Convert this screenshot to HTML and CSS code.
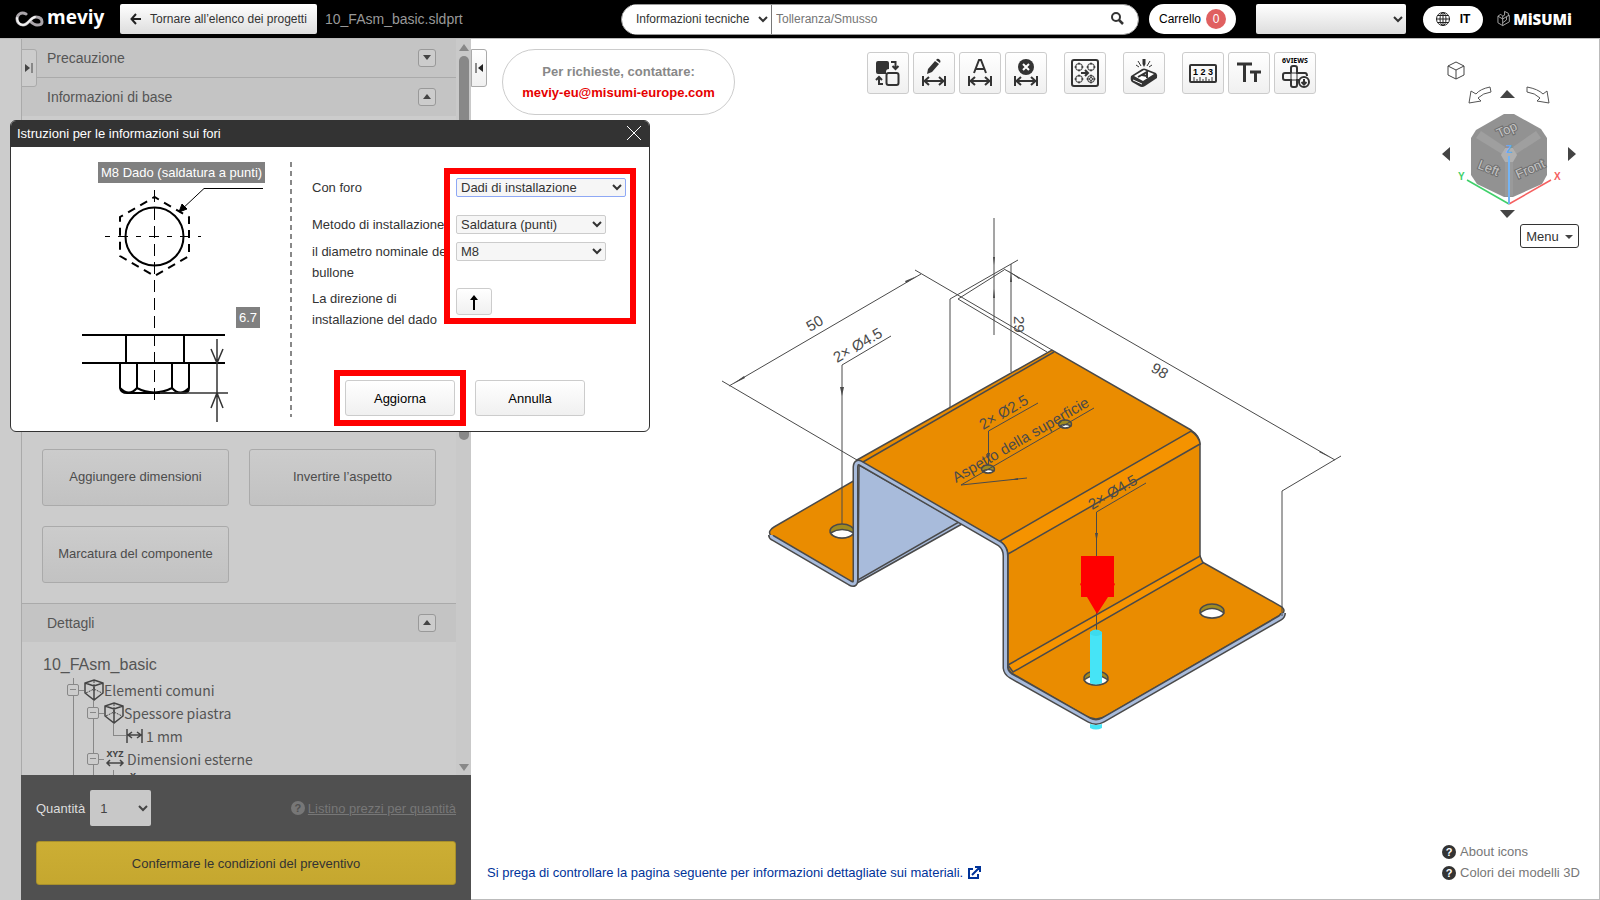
FILE: index.html
```
<!DOCTYPE html>
<html lang="it">
<head>
    <meta charset="UTF-8">
    <meta name="viewport" content="width=device-width, initial-scale=1.0">
    <title>meviy - 10_FAsm_basic.sldprt</title>
    <link rel="stylesheet" href="styles.css">
</head>
<body>

    <header class="topbar">
        <div class="logo">
            <svg width="29" height="16" viewBox="0 0 29 16" fill="none" stroke-linecap="round">
                <path d="M11 3C6 0 2 4 2 8c0 3 2 6 6 6 6 0 7-8 13-8 4 0 6 2 6 5 0 3-3 3-5 3-3 0-5-2-7-4" stroke="#aaa5aa" stroke-width="3"/>
                <path d="M2 7c0 4 3 7 6 7 5 0 7-7 12-8" stroke="#f2f2f2" stroke-width="2"/>
            </svg>
            <span>meviy</span>
        </div>
        <button class="back">
            <svg width="12" height="12" viewBox="0 0 12 12" fill="none" stroke="#222" stroke-width="2"><path d="M6 1L1.500 6L6 11M2 6H11"/></svg>
            Tornare all’elenco dei progetti
        </button>
        <span class="filename">10_FAsm_basic.sldprt</span>

        <div class="search">
            <select aria-label="Categoria"><option>Informazioni tecniche</option></select>
            <input type="text" placeholder="Tolleranza/Smusso" aria-label="Cerca">
            <svg width="15" height="15" viewBox="0 0 15 15" fill="none" stroke="#333"><circle cx="6" cy="5" r="4" stroke-width="2"/><path d="M9 8L13 12" stroke-width="2.500"/></svg>
        </div>
        <button class="cart">Carrello <span class="badge">0</span></button>
        <select class="account" aria-label="Account"><option></option></select>
        <button class="lang">
            <svg width="14" height="14" viewBox="0 0 14 14" fill="none" stroke="#222"><circle cx="7" cy="7" r="6.500"/><ellipse cx="7" cy="7" rx="3" ry="6.500"/><path d="M7 0V14M0 7H14M1.500 3.500H12.500M1.500 10.500H12.500"/></svg>
            IT
        </button>
        <div class="misumi">
            <svg width="15" height="18" viewBox="0 0 15 18" fill="none" stroke="#aaa"><path d="M1 6L6 9V16L1 13ZM6 9L10 6.500M6 16L13 12V5L10 6.500V10L6 13M6 6L8 5V1L12 3V6M1 6L4 4L6 6V9"/></svg>
            <span>MiSUMi</span>
        </div>
    </header>

    <div class="layout">
        <aside class="sidebar">
            <button class="handle handle-open" aria-label="Apri pannello">
                <svg width="8" height="10" viewBox="0 0 8 10"><path d="M0 1L5 5L0 9Z" fill="#444"/><path d="M7 0V10" stroke="#444"/></svg>
            </button>
            <div class="scroll">
                <div class="panel">
                    <div class="section-head first"><span>Precauzione</span><button class="toggle down" aria-label="Espandi"></button></div>
                    <div class="section-head"><span>Informazioni di base</span><button class="toggle" aria-label="Riduci"></button></div>
                    <div class="actions">
                        <button>Aggiungere dimensioni</button>
                        <button>Invertire l’aspetto</button>
                        <button>Marcatura del componente</button>
                    </div>
                    <div class="section-head"><span>Dettagli</span><button class="toggle" aria-label="Riduci"></button></div>
                    <div class="tree">
                        <p>10_FAsm_basic</p>
                        <ul>
                            <li>
                                <div class="row"><i class="minus"></i>
                                    <svg class="part" viewBox="0 0 20 22"><use href="#cube"/></svg>Elementi comuni</div>
                                <ul>
                                    <li>
                                        <div class="row"><i class="minus"></i>
                                            <svg class="part" viewBox="0 0 20 22"><use href="#cube"/></svg>Spessore piastra</div>
                                        <ul>
                                            <li class="leaf"><div class="row">
                                                <svg class="dim" viewBox="0 0 17 14" fill="none" stroke="#444" stroke-width="1.500"><path d="M1 0V14M16 0V14M2 6H15M6 3L2 6L6 9M11 3L15 6L11 9"/></svg>1 mm</div></li>
                                        </ul>
                                    </li>
                                    <li>
                                        <div class="row"><i class="minus"></i>
                                            <svg class="xyz" viewBox="0 0 20 20"><text x="10" y="8" text-anchor="middle">XYZ</text><path d="M2 14H18M5 11L2 14L5 17M15 11L18 14L15 17" fill="none" stroke="#444" stroke-width="1.500"/></svg>Dimensioni esterne</div>
                                        <ul>
                                            <li><div class="row"><svg class="axis" viewBox="0 0 20 20"><text x="8" y="7" text-anchor="middle">X</text></svg></div></li>
                                        </ul>
                                    </li>
                                </ul>
                            </li>
                        </ul>
                    </div>
                </div>
                <div class="scrollbar"><i class="up"></i><span></span><i class="dn"></i></div>
            </div>
            <div class="order">
                <div class="order-line">
                    <label for="qty">Quantità</label>
                    <select id="qty"><option>1</option></select>
                    <a href="#"><i class="help">?</i><span>Listino prezzi per quantità</span></a>
                </div>
                <button class="confirm">Confermare le condizioni del preventivo</button>
            </div>
        </aside>

        <main class="viewer">
            <svg class="canvas" width="1128" height="860" viewBox="471 39 1128 860">
                <g class="edge">
                    <!-- left flange -->
                    <path class="face" d="M774 527L855 480V582L851 582L771 536Q767 531 774 527Z"/>
                    <ellipse cx="842" cy="531" rx="12" ry="7" fill="#a08a20"/>
                    <path d="M830.500 533Q842 526 854 533Q850 538 842 538Q834 538 830.500 533Z" fill="#fff"/>
                    <!-- inner wall -->
                    <path d="M857 583L962 524L958 520L857 579Z" fill="#a8bbdb"/>
                    <path d="M859 465L959 522L858 580Z" fill="#a8bbdb"/>
                    <!-- top, front wall and right flange -->
                    <path class="face" d="M857 460L1052 350L1191 430Q1200 436 1200 444V557Q1200 561 1204 563L1282 607Q1286 611 1282 614L1106 716Q1096 722 1086 716L1013 674Q1008 671 1008 666V555Q1008 546 1000 542Z"/>
                    <path d="M1000 541L1191 431Q1199 436 1200 444L1008 554Q1007 546 1000 541ZM1008 665L1200 556L1203 563L1013 672Z" fill="#f59300"/>
                    <path d="M863 462L1054 352"/>
                </g>
                <path class="rim" d="M771 535Q771 537 773 538L850 583Q855.500 586 855.500 580V467Q856 460 862 464L1000 544Q1005.500 548 1005.500 556V668Q1006 673 1011 676L1089 720Q1096 724 1103 720L1280 618Q1283 616 1283 613"/>
                <path class="rim-fill" d="M771 535Q771 537 773 538L850 583Q855.500 586 855.500 580V467Q856 460 862 464L1000 544Q1005.500 548 1005.500 556V668Q1006 673 1011 676L1089 720Q1096 724 1103 720L1280 618Q1283 616 1283 613"/>

                <!-- holes -->
                <g class="edge">
                    <g fill="#a08a20"><ellipse cx="988" cy="469" rx="6.500" ry="4"/><ellipse cx="1065" cy="424" rx="6.500" ry="4"/><ellipse cx="1212" cy="611" rx="12" ry="7"/><ellipse cx="1096" cy="678" rx="12" ry="7"/></g>
                    <g fill="#fff"><path d="M983 471Q988 468 994 471Q992 473 988 473Q985 473 983 471ZM1060 426Q1065 423 1071 426Q1069 428 1065 428Q1062 428 1060 426ZM1200 613Q1212 604 1224 613Q1221 618 1212 618Q1203 618 1200 613ZM1084 680Q1096 671 1108 680Q1105 685 1096 685Q1087 685 1084 680Z"/></g>
                </g>

                <!-- dimension lines -->
                <g class="line">
                    <path d="M722 381L857 460M729 386L921 274M915 270L1052 350M958 299L1047 352M958 299L1004 270M950 408V299L1018 260M1011 264V372M994 218V335"/>
                    <path d="M1004 269L1335 460M1341 456L1282 491V616"/>
                    <path d="M842 524V365L891 336M988.500 465V431L1038 403M1096.500 632V512L1146 483M1094 408L961 485L1027 478"/>
                </g>
                <path class="tip" d="M733 384L745 378L744 376ZM917 276L905 281L906 283ZM994 265L993 257H995ZM994 289L993 298H995ZM1011 272L1010 282H1012ZM842 396L840 387H844ZM1096.500 541L1095 533H1098ZM988.500 461L987 453H990ZM1007 270L1020 278L1019 279ZM1331 458L1319 452L1320 451ZM1010 480L1018 478V480Z"/>
                <g class="note">
                    <text transform="translate(810 332) rotate(-30)">50</text>
                    <text transform="translate(837 363) rotate(-30)">2× Ø4.5</text>
                    <text transform="translate(983 430) rotate(-30)">2× Ø2.5</text>
                    <text transform="translate(1092 510) rotate(-30)">2× Ø4.5</text>
                    <text transform="translate(956 483) rotate(-30)">Aspetto della superficie</text>
                    <text transform="translate(1014 316) rotate(90)">29</text>
                    <text transform="translate(1150 371) rotate(30)">98</text>
                </g>

                <!-- selected hole -->
                <path d="M1081 556H1114V583L1115 584L1114 586V597H1108L1097 614L1087 597H1081V586L1080 584L1081 583Z" fill="#f00"/>
                <path d="M1090 632Q1096 627 1102 632V683Q1096 686 1090 683ZM1090 724Q1096 726 1102 724V728Q1096 731 1090 728Z" fill="#46e4f6"/>
                <ellipse cx="1096" cy="633" rx="6" ry="3" fill="#3ddbed"/>
            </svg>

            <div class="viewer-top">
                <button class="handle" aria-label="Chiudi pannello">
                    <svg width="8" height="10" viewBox="0 0 8 10"><path d="M8 1L3 5L8 9Z" fill="#222"/><path d="M1 0V10" stroke="#222"/></svg>
                </button>
                <div class="contact">
                    <span>Per richieste, contattare:</span>
                    <a href="mailto:meviy-eu@misumi-europe.com">meviy-eu@misumi-europe.com</a>
                </div>
                <div class="toolbar">
                    <div class="group">
                        <button aria-label="Invertire"><svg viewBox="0 0 28 30"><path d="M4 3H13Q15 3 15 5V11Q12 11 12 14V16H4Q2 16 2 14V5Q2 3 4 3Z" fill="#333"/><rect x="12.500" y="15" width="12" height="12" rx="2" class="s2"/><path class="s2" d="M17 4H21.500V11M18.500 8L21.500 11L24.500 8M9 26H5V19M2 22L5 19L8 22"/></svg></button>
                        <button aria-label="Modifica quota"><svg viewBox="0 0 28 30"><path d="M7 16L8 11L15 3L19 6L12 14ZM16 2L17 1Q18 0 20 2Q21 3 20 5Z" fill="#333"/><use href="#arrows"/></svg></button>
                        <button aria-label="Quota"><svg viewBox="0 0 28 30"><path class="s2" d="M8 15L13 2H15L20 15M10 11H18"/><use href="#arrows"/></svg></button>
                        <button aria-label="Elimina quota"><svg viewBox="0 0 28 30"><circle cx="14" cy="9" r="8" fill="#333"/><path d="M11 6L17 12M17 6L11 12" stroke="#fff" stroke-width="2"/><use href="#arrows"/></svg></button>
                    </div>
                    <div class="group">
                        <button aria-label="Fori"><svg viewBox="0 0 28 30"><rect x="1" y="2" width="26" height="26" rx="2" class="s2"/><g class="s1"><circle cx="8" cy="9" r="3.500"/><circle cx="20" cy="9" r="3.500"/><circle cx="8" cy="21" r="3.500"/><circle cx="20" cy="21" r="3.500"/><circle cx="20" cy="21" r="1.500"/><path d="M3.500 9H6M10 9H12.500M8 4.500V7M8 11V13.500M15.500 9H18M22 9H24.500M20 4.500V7M20 11V13.500M3.500 21H6M10 21H12.500M8 16.500V19M8 23V25.500M15.500 21H18M22 21H24.500M20 16.500V19M20 23V25.500"/></g><path class="s2" d="M10 15H17M14 12L17 15L14 18"/></svg></button>
                    </div>
                    <div class="group">
                        <button aria-label="Marcatura"><svg viewBox="0 0 28 30"><path d="M1 18L12 11Q14 10 16 11L26 15Q28 17 27 20L15 28Q12 30 9 28L2 24Q0 22 1 18Z" fill="#333"/><path d="M4 18L14 12L24 16L13 23Z" fill="#fff"/><path d="M8 19L17 14L17 20M12 17L17 18" fill="none" stroke="#333" stroke-width="2"/><path d="M3 22L12 26" stroke="#fff"/><path d="M12.500 1H15.500V6L14 9L12.500 6Z" fill="#333"/><path class="s1" d="M8 3L11 8M20 3L17 8M6 7L9 9M22 7L19 9"/></svg></button>
                    </div>
                    <div class="group">
                        <button aria-label="Misura"><svg viewBox="0 0 28 30"><rect x="1" y="7" width="26" height="17" rx="1" class="s2"/><path class="s1" d="M5 24V19M8 24V21M11 24V19M14 24V21M17 24V19M20 24V21M23 24V19"/><text x="14" y="17" text-anchor="middle" class="digits">1 2 3</text></svg></button>
                        <button aria-label="Testo"><svg viewBox="0 0 28 30" fill="none" stroke="#333" stroke-width="3"><path d="M2 6H17M9.500 6V24M15 14H26M20.500 14V24"/></svg></button>
                        <button aria-label="6 viste"><svg viewBox="0 0 28 30"><text x="14" y="5" text-anchor="middle" class="views">6VIEWS</text><path class="s2" d="M10 15V10Q10 8 12 8H14Q16 8 16 10V15H24Q26 15 26 18M10 15H4Q2 15 2 17V20Q2 22 4 22H10V27Q10 29 12 29H14Q16 29 16 27V22H18"/><path class="s1" d="M10 15H16V22H10Z"/><circle cx="23" cy="24" r="5" class="ring"/><path class="s2" d="M23 21V26M20.500 24L23 26.500L25.500 24"/></svg></button>
                    </div>
                </div>
                <div class="nav">
                    <svg width="150" height="165" viewBox="1440 55 150 165">
                        <path d="M1456 62L1464 66V75L1456 79L1448 75V66ZM1448 66L1456 70L1464 66M1456 70V79" fill="none" stroke="#444"/>
                        <path d="M1490 87Q1480 89 1476 94L1471 91L1469 103L1481 101L1478 98Q1483 93 1491 92ZM1527 87Q1538 89 1543 94L1547 91L1549 103L1537 101L1540 98Q1535 93 1527 92Z" fill="#fff" stroke="#555"/>
                        <path d="M1507 90L1515 98H1500ZM1507 218L1515 210H1500ZM1442 154L1450 147V161ZM1576 154L1568 147V161Z" fill="#444"/>
                        <path d="M1504 114H1514L1541 129L1547 138V175L1542 184L1513 197H1504L1477 184L1471 175V138L1476 130Z" fill="#929292"/>
                        <path d="M1476 138L1481 131L1505 147L1502 154ZM1541 138L1536 131L1513 147L1516 154Z" fill="#9f9f9f"/>
                        <path d="M1505 162H1513V196H1505Z" fill="#9a9a9a"/>
                        <path d="M1505 148H1513L1517 155L1513 162H1505L1501 155Z" fill="#b0b0b0"/>
                        <g class="cube-text">
                            <text transform="translate(1499 138) rotate(-25)">Top</text>
                            <text transform="translate(1477 168) rotate(22)">Left</text>
                            <text transform="translate(1518 179) rotate(-24)">Front</text>
                        </g>
                        <path d="M1509 204L1467 180" stroke="#3fd06a" stroke-width="1.500"/>
                        <path d="M1509 204L1551 180" stroke="#f56060" stroke-width="1.500"/>
                        <path d="M1509 204V156" stroke="#74b4f4" stroke-width="2"/>
                        <g class="axes"><text x="1458" y="180" fill="#3fd06a">Y</text><text x="1554" y="180" fill="#f56060">X</text><text x="1506" y="153" fill="#62aaf5">Z</text></g>
                    </svg>
                    <button class="menu">Menu</button>
                </div>
            </div>

            <div class="viewer-bottom">
                <a class="materials" href="#">Si prega di controllare la pagina seguente per informazioni dettagliate sui materiali.
                    <svg width="14" height="14" viewBox="0 0 14 14" fill="none" stroke="#003399" stroke-width="2"><path d="M6 3H2V12H11V8M5 9L12 2M8 1H13V6"/></svg></a>
                <div class="links">
                    <a href="#"><i class="help">?</i>About icons</a>
                    <a href="#"><i class="help">?</i>Colori dei modelli 3D</a>
                </div>
            </div>
        </main>
    </div>

    <section class="dialog" role="dialog" aria-labelledby="dialog-title">
        <div class="dialog-head">
            <h2 id="dialog-title">Istruzioni per le informazioni sui fori</h2>
            <button aria-label="Chiudi"><svg width="16" height="16" viewBox="0 0 16 16" stroke="#fff"><path d="M1 1L15 15M15 1L1 15"/></svg></button>
        </div>
        <div class="dialog-body">
            <div class="drawing">
                <svg width="190" height="260" viewBox="78 162 190 260" fill="none" stroke="#000" stroke-width="2">
                    <circle cx="154.500" cy="236.500" r="29"/>
                    <path d="M154.500 197L189 217V256L154.500 276L120 256V217Z" stroke-dasharray="8 6" stroke-dashoffset="3"/>
                    <path d="M82 335H225M82 363H225M126 335V363M184 335V363M120 363V388Q121 393 127 393H183Q189 393 189 388V363M137 363V388M172 363V388M120 388Q129 397 137 388Q154 397 172 388Q180 397 189 388"/>
                    <path d="M154.500 190V404" stroke-width="1" stroke-dasharray="12 6"/>
                    <path d="M105 236.500H201" stroke-width="1" stroke-dasharray="5 8 10 8"/>
                    <path d="M263 188.500H204L180 211" stroke-width="1"/>
                    <path d="M179 212L182 204L187 209Z" fill="#000" stroke-width="1"/>
                    <path d="M217 339V422M211 349L217 363L223 349M211 408L217 393L223 408M160 393H228" stroke="#333" stroke-width="1.500"/>
                </svg>
                <span class="tag tag-nut">M8 Dado (saldatura a punti)</span>
                <span class="tag tag-height">6.7</span>
            </div>
            <form class="fields">
                <label for="hole">Con foro</label>
                <select id="hole" class="wide"><option>Dadi di installazione</option></select>
                <label for="method">Metodo di installazione</label>
                <select id="method"><option>Saldatura (punti)</option></select>
                <label for="diameter">il diametro nominale del bullone</label>
                <select id="diameter"><option>M8</option></select>
                <label for="direction">La direzione di installazione del dado</label>
                <button type="button" id="direction" class="direction" aria-label="Direzione"><svg width="10" height="15" viewBox="0 0 10 15"><path d="M5 0L9 5H6V15H4V5H1Z"/></svg></button>
                <div class="buttons">
                    <button type="button">Aggiorna</button>
                    <button type="button">Annulla</button>
                </div>
            </form>
            <span class="mark mark-fields"></span>
            <span class="mark mark-update"></span>
        </div>
    </section>

    <!-- shared icons -->
    <svg width="0" height="0" class="defs">
        <defs>
            <g id="cube" fill="none" stroke="#444" stroke-width="1.500"><path d="M10 1L19 4V14L10 21L1 14V4ZM1 4L10 7L19 4M10 7V21"/><path d="M10 2V12M2 14L10 10L18 14" stroke-width="1" stroke-dasharray="2 1"/></g>
            <g id="arrows" fill="none" stroke="#333" stroke-width="2"><path d="M3 18V28M25 18V28M4 23H24M9 19L4.500 23L9 27M19 19L23.500 23L19 27"/></g>
        </defs>
    </svg>

</body>
</html>
```

FILE: styles.css
```
* {
    box-sizing: border-box;
}
body {
    margin: 0;
    height: 100vh;
    display: flex;
    flex-direction: column;
    position: relative;
    overflow: hidden;
    font-family: "Liberation Sans", Arial, sans-serif;
    font-size: 13px;
    color: #333;
    background-color: #fff;
}
button, select, input {
    font-family: inherit;
    font-size: 13px;
    color: #333;
    margin: 0;
}
button {
    padding: 0;
    border: 1px solid #ccc;
    border-radius: 3px;
    background: linear-gradient(#fff, #f0f0f0);
    cursor: pointer;
}
a {
    text-decoration: none;
    color: inherit;
}
.defs {
    position: absolute;
}

/* Top bar */
.topbar {
    flex: none;
    display: flex;
    align-items: center;
    height: 38px;
    padding: 0 28px 0 15px;
    background-color: #000;
    color: #fff;
}
.topbar button, .topbar select, .topbar input {
    font-size: 12px;
}
.logo {
    display: flex;
    align-items: center;
    gap: 3px;
    width: 105px;
    font: bold 19px "Open Sans", sans-serif;
}
.logo span {
    line-height: 30px;
    margin-top: -4px;
}
.back {
    display: flex;
    align-items: center;
    justify-content: center;
    gap: 8px;
    width: 197px;
    height: 30px;
    border: none;
    border-radius: 2px;
    background: linear-gradient(#fff, #ddd);
}
.filename {
    margin-left: 8px;
    font-size: 14px;
    color: #999;
}
.search {
    display: flex;
    align-items: center;
    width: 518px;
    height: 31px;
    margin-left: auto;
    padding: 0 13px 0 10px;
    border: 1px solid #999;
    border-radius: 16px;
    background-color: #fff;
}
.search select {
    width: 140px;
    height: 29px;
    border: none;
    border-right: 1px solid #777;
    background-color: #fff;
}
.search input {
    flex: 1;
    min-width: 0;
    padding: 0 4px;
    border: none;
    outline: none;
    background: none;
}
.cart {
    display: flex;
    align-items: center;
    gap: 5px;
    width: 87px;
    height: 30px;
    margin-left: 10px;
    padding-left: 10px;
    border: none;
    border-radius: 15px;
    background: #fff;
}
.topbar .cart, .topbar .lang {
    color: #000;
}
.badge {
    width: 20px;
    height: 20px;
    border-radius: 50%;
    background-color: #e06060;
    color: #fff;
    line-height: 20px;
}
.account {
    width: 150px;
    height: 30px;
    margin-left: 20px;
    border: none;
    border-radius: 2px;
    background: linear-gradient(#fff, #ddd);
}
.lang {
    display: flex;
    align-items: center;
    justify-content: center;
    gap: 10px;
    width: 60px;
    height: 27px;
    margin-left: 17px;
    border: none;
    border-radius: 14px;
    background: #fff;
    font-weight: bold;
}
.misumi {
    display: flex;
    align-items: center;
    gap: 2px;
    width: 75px;
    margin-left: 14px;
    font: 900 15px "Open Sans", sans-serif;
}

.layout {
    flex: 1;
    min-height: 0;
    display: flex;
    padding-left: 21px;
    border-top: 1px solid #bbb;
    background-color: #ccc;
}

/* Side panel */
.sidebar {
    position: relative;
    flex: none;
    display: flex;
    flex-direction: column;
    width: 450px;
    color: #555;
}
.handle {
    display: flex;
    align-items: center;
    justify-content: center;
    width: 16px;
    height: 38px;
    margin-top: 10px;
    border-color: #aaa;
    border-radius: 0 3px 3px 0;
}
.handle-open {
    position: absolute;
    left: 0;
    top: 0;
    background: #ccc;
}
.scroll {
    flex: 1;
    min-height: 0;
    display: flex;
    overflow: hidden;
    border-left: 1px solid #aaa;
}
.panel {
    flex: 1;
}
.section-head {
    display: flex;
    align-items: center;
    justify-content: space-between;
    height: 39px;
    padding: 0 20px 0 25px;
    border-top: 1px solid #aaa;
    background-color: #c4c4c4;
    font-size: 14px;
}
.section-head.first {
    height: 38px;
    border-top: none;
}
.toggle {
    width: 18px;
    height: 18px;
    border-color: #999;
    background: #ccc;
}
.toggle::before, .menu::after {
    content: "";
    display: inline-block;
    vertical-align: middle;
    border: 4px solid transparent;
    border-top: none;
    border-bottom: 5px solid #444;
    margin-bottom: 4px;
}
.toggle.down::before, .menu::after {
    border-bottom: none;
    border-top: 5px solid #444;
}
.actions {
    display: grid;
    grid-template-columns: 1fr 1fr;
    align-content: end;
    gap: 20px;
    min-height: 487px;
    padding: 20px;
}
.actions button {
    height: 57px;
    padding-bottom: 3px;
    border-color: #aaa;
    background: linear-gradient(#ccc, #c2c2c2);
    color: #4c4c4c;
}
.tree {
    padding: 13px 20px 0 21px;
    font-family: "Noto Sans CJK JP", sans-serif;
    font-size: 14px;
}
.tree p {
    margin: 0;
    font: 16px/20px "Liberation Sans", sans-serif;
    padding-bottom: 3px;
}
.tree ul {
    list-style: none;
    margin: 0;
    padding-left: 20px;
}
.tree > ul {
    padding-left: 24px;
}
.tree li {
    position: relative;
}
.tree li::before {
    content: "";
    position: absolute;
    left: 6px;
    top: 0;
    bottom: 0;
    border-left: 1px solid #888;
}
.tree li.leaf::before {
    width: 12px;
    bottom: 11px;
    border-bottom: 1px solid #888;
}
.tree svg {
    overflow: visible;
}
.row {
    display: flex;
    align-items: center;
    height: 23px;
}
.minus {
    position: relative;
    width: 12px;
    height: 12px;
    margin-right: 5px;
    border: 1px solid #888;
    border-radius: 2px;
    background: linear-gradient(#888, #888) center / 6px 1px no-repeat #ccc;
}
.minus::after {
    content: "";
    position: absolute;
    left: 11px;
    top: 5px;
    width: 5px;
    border-top: 1px solid #888;
}
.part {
    width: 20px;
    height: 22px;
}
.dim {
    width: 17px;
    height: 14px;
    margin: 0 3px 0 19px;
}
.xyz, .axis {
    width: 20px;
    height: 20px;
    margin: 0 2px 0 1px;
    font: bold 9px "Noto Sans", sans-serif;
    fill: #444;
}
.axis {
    margin-left: 18px;
}
.scrollbar {
    display: flex;
    flex-direction: column;
    align-items: center;
    width: 15px;
    padding: 5px 0 4px;
    background-color: #c9c9c9;
}
.scrollbar span {
    width: 10px;
    height: 384px;
    margin: 5px 0 auto;
    border-radius: 5px;
    background-color: #888;
}
.scrollbar i {
    border: 5px solid transparent;
}
.scrollbar .up {
    border-top: none;
    border-bottom: 7px solid #888;
}
.scrollbar .dn {
    border-bottom: none;
    border-top: 7px solid #888;
}
.order {
    padding: 15px;
    background-color: #505050;
}
.order-line {
    display: flex;
    align-items: center;
    gap: 5px;
    margin-bottom: 15px;
    color: #ddd;
}
.order-line select {
    width: 61px;
    height: 36px;
    padding-left: 6px;
    border: none;
    border-radius: 2px;
    background-color: #c8c8c8;
    color: #444;
}
.order-line a {
    display: flex;
    align-items: center;
    gap: 3px;
    margin-left: auto;
    color: #777;
}
.order-line a span {
    text-decoration: underline;
}
.order-line .help {
    background-color: #777;
    color: #505050;
}
.help {
    width: 14px;
    height: 14px;
    border-radius: 50%;
    background-color: #333;
    color: #fff;
    font: bold 11px/14px "Liberation Sans", sans-serif;
    text-align: center;
}
.confirm {
    width: 100%;
    height: 44px;
    border-color: #a8902c;
    background: linear-gradient(#ccae34, #c5a72f);
}

/* 3D viewer */
.viewer {
    position: relative;
    flex: 1;
    display: flex;
    flex-direction: column;
    justify-content: space-between;
    border-right: 1px solid #bbb;
    border-bottom: 1px solid #bbb;
    background-color: #fff;
    overflow: hidden;
}
.canvas {
    position: absolute;
    left: 0;
    top: 0;
}
.edge {
    stroke: #4a4a4a;
    stroke-width: 1.5;
    fill: none;
}
.face {
    fill: #ea8c00;
}
.rim, .rim-fill {
    fill: none;
    stroke: #4a4a4a;
    stroke-width: 6;
}
.rim-fill {
    stroke: #a8bbdb;
    stroke-width: 3;
}
.line {
    fill: none;
    stroke: #4a4a4a;
}
.tip {
    fill: #4a4a4a;
}
.note {
    font-size: 15px;
    fill: #4a4a4a;
}
.viewer-top, .viewer-bottom {
    position: relative;
    display: flex;
    align-items: flex-start;
}
.contact {
    display: flex;
    flex-direction: column;
    align-items: center;
    justify-content: center;
    width: 233px;
    height: 66px;
    margin: 10px 0 0 15px;
    border: 1px solid #ccc;
    border-radius: 33px;
    font-weight: bold;
    line-height: 21px;
    color: #888;
}
.contact a {
    color: #e60000;
}
.toolbar {
    display: flex;
    gap: 17px;
    margin: 13px 0 0 auto;
}
.group {
    display: flex;
    gap: 4px;
}
.group button {
    width: 42px;
    height: 42px;
}
.group svg {
    display: block;
    width: 28px;
    height: 30px;
    margin: 0 auto;
    overflow: visible;
}
.s1, .s2, .ring {
    fill: none;
    stroke: #333;
    stroke-width: 1;
}
.s2 {
    stroke-width: 2;
}
.ring {
    fill: #fff;
    stroke-width: 2;
}
.digits {
    font: bold 9px "Liberation Sans", sans-serif;
}
.views {
    font: bold 7px "Noto Sans", sans-serif;
}
.nav {
    display: flex;
    flex-direction: column;
    align-items: flex-end;
    width: 283px;
    padding: 16px 9px 0 0;
}
.cube-text {
    font-size: 13px;
    fill: #c4c4c4;
    stroke: #707070;
    stroke-width: 2px;
    paint-order: stroke;
}
.axes {
    font: bold 10px "Liberation Sans", sans-serif;
}
.menu {
    width: 59px;
    height: 24px;
    margin: 4px 11px 0 0;
    border-color: #333;
    background: #fff;
}
.menu::after {
    margin: 0 0 1px 6px;
    border-top-width: 4px;
}
.viewer-bottom {
    justify-content: space-between;
    align-items: flex-end;
    padding: 0 19px 16px 16px;
    line-height: 21px;
}
.materials {
    color: #003399;
}
.materials svg {
    vertical-align: -3px;
}
.links a {
    display: flex;
    align-items: center;
    gap: 4px;
    color: #777;
}

/* Hole dialog */
.dialog {
    position: absolute;
    left: 10px;
    top: 120px;
    width: 640px;
    border: 1px solid #333;
    border-radius: 6px;
    background-color: #fff;
    overflow: hidden;
}
.dialog-head {
    display: flex;
    align-items: center;
    justify-content: space-between;
    height: 26px;
    padding: 0 7px 2px 6px;
    background-color: #333;
}
.dialog-head h2 {
    margin: 0;
    font-size: 13px;
    font-weight: normal;
    color: #fff;
}
.dialog-head button {
    height: 16px;
    border: none;
    background: none;
}
.dialog-body {
    position: relative;
    display: flex;
    padding: 15px 0 9px;
}
.drawing {
    position: relative;
    width: 281px;
    padding-left: 67px;
}
.drawing::after {
    content: "";
    position: absolute;
    right: 0;
    top: 0;
    bottom: 5px;
    width: 2px;
    background: repeating-linear-gradient(#888 0 5px, transparent 5px 9px);
}
.drawing svg {
    display: block;
}
.tag {
    position: absolute;
    padding: 0 3px;
    background-color: #808080;
    color: #fff;
    line-height: 21px;
}
.tag-nut {
    left: 87px;
    top: 0;
}
.tag-height {
    left: 225px;
    top: 145px;
}
.fields {
    display: grid;
    grid-template-columns: 144px 170px;
    grid-template-rows: 37px 27px 47px 40px auto;
    align-content: start;
    justify-items: start;
    padding: 15px 0 0 20px;
    line-height: 21px;
}
.fields select {
    width: 150px;
    height: 19px;
    margin-top: 1px;
    padding: 0;
    border: 1px solid #ccc;
    border-radius: 2px;
    background-color: #f6f6f6;
}
.fields .wide {
    width: 170px;
    border-color: #8ea8f5;
}
.direction {
    width: 36px;
    height: 27px;
}
.direction svg {
    vertical-align: middle;
}
.buttons {
    grid-column: 1 / 3;
    display: flex;
    gap: 20px;
    padding: 52px 0 0 33px;
}
.buttons button {
    width: 110px;
    height: 36px;
    color: #000;
}
.mark {
    position: absolute;
    border: 6px solid #f00;
    pointer-events: none;
}
.mark-fields {
    left: 433px;
    top: 21px;
    width: 192px;
    height: 156px;
}
.mark-update {
    left: 323px;
    top: 223px;
    width: 132px;
    height: 56px;
}
```
